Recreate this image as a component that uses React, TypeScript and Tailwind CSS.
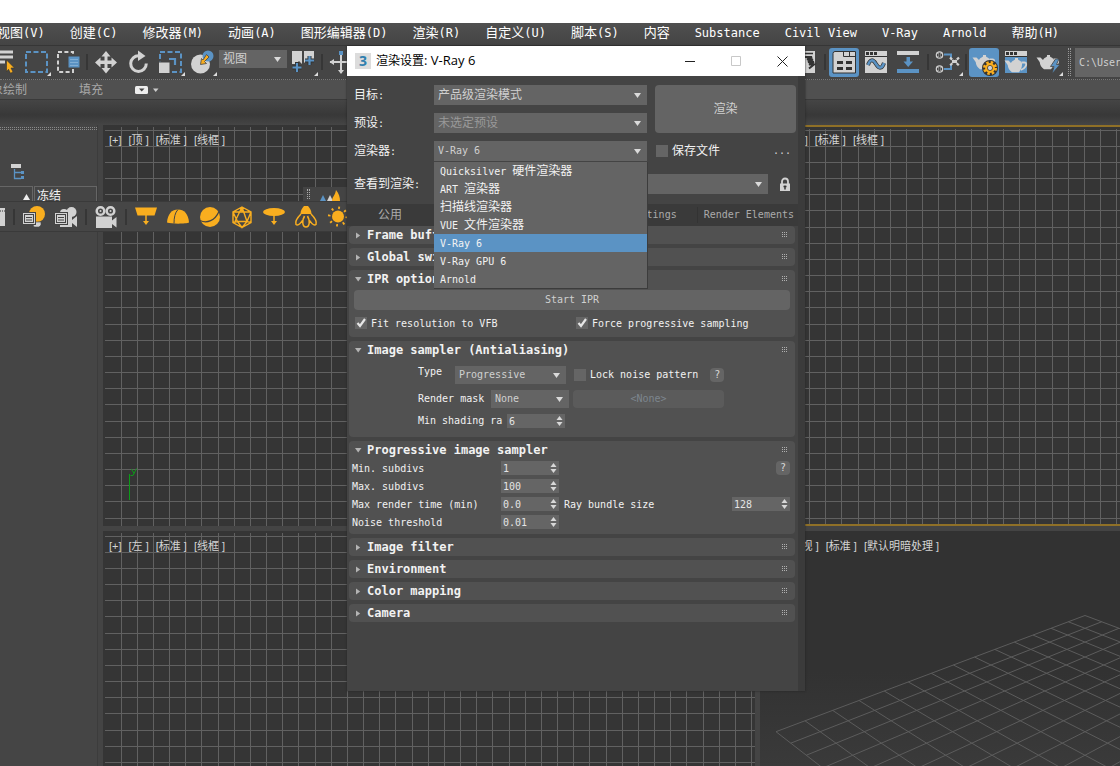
import React from 'react';

const MENU = [
  '视图(V)', '创建(C)', '修改器(M)', '动画(A)', '图形编辑器(D)', '渲染(R)', '自定义(U)',
  '脚本(S)', '内容', 'Substance', 'Civil View', 'V-Ray', 'Arnold', '帮助(H)',
];

const RENDERERS = [
  'Quicksilver 硬件渲染器', 'ART 渲染器', '扫描线渲染器', 'VUE 文件渲染器', 'V-Ray 6', 'V-Ray GPU 6', 'Arnold',
];

const GRAY = '#d2d2d2';
const BLUE = '#5b93c4';
const ORANGE = '#f9ae1f';
const DARK = '#333333';

// Chinese runs take the size of the parent, latin runs get their own size
const Mixed: React.FC<{ text: string; latin?: string }> = ({ text, latin = 'text-[10px]' }) => (
  <span className="whitespace-pre">
    {text.split(/([\x20-\x7e]+)/).map((part, i) =>
      i % 2 ? <span key={i} className={latin}>{part}</span> : part
    )}
  </span>
);

/* ---------- small pieces ---------- */

const Down: React.FC = () => (
  <svg width="7" height="5" viewBox="0 0 7 5"><path d="M0 0h7L3.5 5z" fill="#dadada" /></svg>
);

const Dropdown: React.FC<{ label: string; value: string; className: string; textClass?: string }> = ({
  label, value, className, textClass = 'text-[10px] text-[#d0d0d0]',
}) => (
  <div className={`relative bg-[#646464] ${className}`}>
    <select aria-label={label} className={`block h-full w-full appearance-none bg-transparent pl-1 pr-4 outline-none ${textClass}`}>
      <option>{value}</option>
    </select>
    <span className="pointer-events-none absolute inset-y-0 right-1.5 flex items-center"><Down /></span>
  </div>
);

const Check: React.FC<{ label: string; checked?: boolean; className?: string }> = ({ label, checked, className = '' }) => (
  <label className={`flex items-center gap-1 ${className}`}>
    <span className="relative flex">
      <input type="checkbox" defaultChecked={checked} className="peer h-3 w-3 appearance-none bg-[#656565]" />
      <svg className="pointer-events-none absolute inset-0 hidden peer-checked:block" width="12" height="12" viewBox="0 0 12 12">
        <path d="M2.5 6l2.5 3 5-7" fill="none" stroke="#e6e6e6" strokeWidth="2.2" />
      </svg>
    </span>
    <Mixed text={label} />
  </label>
);

const Spinner: React.FC<{ id: string; value: string }> = ({ id, value }) => (
  <div className="relative h-3.5 w-[58px] shrink-0 bg-[#656565]">
    <input id={id} defaultValue={value} className="block h-full w-full bg-transparent pl-0.5 pr-3 text-[10px] text-[#e4e4e4] outline-none" />
    <svg className="pointer-events-none absolute right-0.5 top-0.5" width="7" height="10" viewBox="0 0 7 10">
      <path d="M3.5 0L6.5 4h-6zM3.5 10L.5 6h6z" fill="#d8d8d8" />
    </svg>
  </div>
);

const Help: React.FC<{ className?: string }> = ({ className = '' }) => (
  <button className={`h-3.5 w-3.5 rounded-sm bg-[#656565] text-[10px] leading-3 text-[#d8d8d8] ${className}`}>?</button>
);

const Rollup: React.FC<{ title: string; open?: boolean; className?: string; children?: React.ReactNode }> = ({
  title, open, className = '', children,
}) => (
  <section className={`rounded-sm bg-[#515151] ${className}`}>
    <button className="flex h-[18px] w-full items-center pl-1.5 pr-[7px] text-left">
      <svg width="7" height="7" viewBox="0 0 7 7">
        {open ? <path d="M0 1h6.5L3.2 5.5z" fill="#b4b4b4" /> : <path d="M1 0.5L5.2 3.5L1 6.5z" fill="#b4b4b4" />}
      </svg>
      <span className="ml-[5px] text-[12px] font-bold leading-4">{title}</span>
      <svg className="ml-auto" width="7" height="8" viewBox="0 0 7 8" fill="#b0b0b0" shapeRendering="crispEdges">
        {[0, 1, 2].map((r) => [0, 1, 2].map((c) => <rect key={`${r}${c}`} x={c * 2 + 1} y={r * 2 + 1} width="1" height="1" />))}
      </svg>
    </button>
    {children}
  </section>
);

/* ---------- toolbar icons, all on a 32 x 32 box ---------- */

const Icon: React.FC<{ name: string; active?: boolean; flyout?: boolean; children: React.ReactNode }> = ({ name, active, flyout, children }) => (
  <button aria-label={name} className="flex h-8 w-8 shrink-0 items-center justify-center">
    <svg width="32" height="32" viewBox="0 0 32 32" fill="none">
      {active && <rect x="1" y="2" width="30" height="29" rx="3" fill={BLUE} />}
      {children}
      {flyout && <path d="M31 26v4h-4z" fill="#dddddd" />}
    </svg>
  </button>
);

const Sep: React.FC<{ className?: string }> = ({ className = 'w-1.5' }) => (
  <span className={`flex shrink-0 justify-center ${className}`}><span className="h-4 w-0.5 bg-[#363636]" /></span>
);

const Teapot: React.FC = () => (
  <>
    <path d="M4.500 11.500h4l2.500 2.500c.8-1.500 1.600-2.400 3-2.800L15 10.500V9h3v1.500l1 .7c1.500.5 2.500 1.500 3 3 .3 3-.6 6.300-3 9h-7c-2.500-1.500-4-4.200-4.300-7.200z" fill={GRAY} />
    <path d="M21.500 13.500h3c2.300 0 2 2.500.8 4.200-1 1.500-2.500 2.600-4.300 3.100" stroke={GRAY} strokeWidth="1.800" />
  </>
);

const WindowTop: React.FC = () => (
  <>
    <rect x="5" y="5" width="22" height="22" fill={GRAY} />
    <path d="M6 7.500h3M10 7.500h3M14 7.500h3" stroke={DARK} strokeWidth="3" />
    <path d="M5 10.500h22" stroke={DARK} strokeWidth="1" />
  </>
);

const ToolbarLeft: React.FC = () => (
  <div className="-ml-3 flex h-8 items-center">
    <Icon name="按名称选择">
      <path d="M6 6h19M6 11h19M6 16h11" stroke={GRAY} strokeWidth="3" />
      <path d="M18.500 14l8 8h-3.500l2 4-2.500 1.300-2-4-2 2.500z" fill={ORANGE} stroke={DARK} strokeWidth=".6" />
    </Icon>
    <Icon name="矩形选择区域" flyout>
      <rect x="6" y="6" width="21" height="20" stroke={BLUE} strokeWidth="2" strokeDasharray="5 2.500" />
    </Icon>
    <Icon name="窗口/交叉">
      <rect x="6" y="6" width="15" height="20" stroke={GRAY} strokeWidth="2" strokeDasharray="4 2.400" />
      <rect x="16" y="10" width="12" height="12" fill={BLUE} stroke="#444" />
      <path d="M18.500 13.500h8M18.500 16.500h8M18.500 19.500h8" stroke="#a9c9e4" strokeDasharray="1 1" />
    </Icon>
    <Sep />
    <Icon name="移动">
      <path d="M16 5l4.500 5.500h-3v4h4v-3l5.500 5-5.500 5v-3.500h-4v4h3L16 27.500 11.500 22h3v-4h-4v3.500L5 16.500l5.500-5v3h4v-4h-3z" fill={GRAY} />
    </Icon>
    <Icon name="旋转">
      <path d="M17 9.800a7.800 7.800 0 1 0 7.300 7.700" stroke={GRAY} strokeWidth="3" />
      <path d="M16 4.500l7.500 5.500-7.500 5z" fill={GRAY} />
    </Icon>
    <Icon name="缩放" flyout>
      <rect x="6" y="6" width="21" height="20" stroke={BLUE} strokeWidth="2" strokeDasharray="5 2.500" />
      <rect x="4.500" y="16" width="11.500" height="11.500" fill={GRAY} stroke="#444" />
      <path d="M15 13h6v6" stroke={BLUE} strokeWidth="2.200" />
    </Icon>
    <Icon name="放置" flyout>
      <circle cx="14.500" cy="18" r="9.500" fill={GRAY} />
      <circle cx="22" cy="10" r="5.500" fill={BLUE} />
      <path d="M20.500 8.500l2.500 2.500-4.500 4.500 2 2-6 1 1-6 1.500 1.500z" fill={ORANGE} stroke="#444" strokeWidth=".8" />
    </Icon>
    <Dropdown label="参考坐标系" value="视图" className="-mt-1.5 ml-px h-[18px] w-[68px]" textClass="text-xs text-[#d0d0d0]" />
    <Icon name="使用轴点中心" flyout>
      <path d="M5 5h10v13l-3-3-3 3H5zM17 5h10v8l-4 3-3-2-3 3z" fill={GRAY} />
      <path d="M10 16v10M5.500 21.500h9M22.500 10v9M18 14.500h9" stroke={DARK} strokeWidth="4" />
      <path d="M10 17v9M5.500 21.500h9M22.500 10v9M18 14.500h9" stroke={BLUE} strokeWidth="2.200" />
    </Icon>
    <Sep />
    <Icon name="选择并操纵">
      <path d="M5 16h22M16 5v22" stroke={GRAY} strokeWidth="2" />
      <path d="M9 13v6L4.500 16zM13 24h6L16 28z" fill={GRAY} />
      <rect x="14" y="5" width="4" height="4" fill={BLUE} />
    </Icon>
  </div>
);

const ToolbarRight: React.FC = () => (
  <div className="ml-auto flex h-8 items-center">
    <Icon name="层资源管理器">
      <rect x="3" y="5" width="22" height="22" fill={GRAY} />
      <path d="M14 7.500h9" stroke={DARK} strokeWidth="1.500" />
      <path d="M14 11h8l-5 2.500h6l-5 2.500h6l-5 2.500h5l-5 4" stroke={DARK} strokeWidth="2" />
    </Icon>
    <Sep />
    <Icon name="功能区" active>
      <path d="M5 7.500a2 2 0 0 1 2-2h20.500V27H5z" fill={GRAY} stroke={DARK} />
      <path d="M15.500 5.500v5h12M21.500 5.500v5" stroke={DARK} />
      <path d="M9 16.500h6M18 16.500h6M9 22.500h6M18 22.500h6" stroke={DARK} strokeWidth="3" />
    </Icon>
    <Icon name="曲线编辑器">
      <WindowTop />
      <path d="M8 19c2-6 5-6 8-1s6 5 8-1" stroke={DARK} strokeWidth="4" />
      <path d="M8 19c2-6 5-6 8-1s6 5 8-1" stroke={BLUE} strokeWidth="2.500" />
    </Icon>
    <Icon name="图解视图">
      <path d="M5 7h22" stroke={GRAY} strokeWidth="4" />
      <path d="M5 25h22" stroke={BLUE} strokeWidth="4" />
      <path d="M14.500 11h3.500v4.500h3L16.200 21l-4.700-5.500h3z" fill={BLUE} />
    </Icon>
    <Sep className="w-2" />
    <Icon name="材质编辑器" flyout>
      <path d="M12 8.500h7v5M12 23h7v-5" stroke={BLUE} strokeWidth="2" />
      {[[7.5, 9], [7.5, 23]].map(([x, y]) => (
        <g key={y}>
          <circle cx={x} cy={y} r="3.200" stroke={GRAY} strokeWidth="1.200" />
          <path d={`M${x - 2.500} ${y - 2.500}l5 5m0-5l-5 5`} stroke={GRAY} />
          <circle cx={x} cy={y} r="1" fill="#444" />
        </g>
      ))}
      <path d="M18 11.500l4 4-4 4M27 11.500l-4 4 4 4" stroke={GRAY} strokeWidth="2.200" strokeDasharray="3 1" />
      <path d="M20 15.500h5" stroke={GRAY} strokeWidth="3" />
    </Icon>
    <Sep className="w-1" />
    <Icon name="渲染设置" active>
      <Teapot />
      <circle cx="22" cy="22" r="5" stroke={DARK} strokeWidth="6" />
      <circle cx="22" cy="22" r="5.500" stroke={ORANGE} strokeWidth="3" strokeDasharray="2.400 1.920" />
      <circle cx="22" cy="22" r="3.800" stroke={ORANGE} strokeWidth="2.200" />
      <circle cx="22" cy="22" r="2" fill={GRAY} />
    </Icon>
    <Icon name="渲染帧窗口">
      <WindowTop />
      <rect x="5" y="11" width="22" height="16" fill={BLUE} />
      <g transform="translate(0 3)"><Teapot /></g>
    </Icon>
    <Icon name="渲染产品" flyout>
      <Teapot />
      <path d="M23.500 13l-5 7.500H22l-2 7.500 8-9.500h-3.500l2.500-5.500z" fill={BLUE} stroke="#444" strokeWidth=".8" />
    </Icon>
    <span className="ml-1 mr-1 h-7 w-[3px] border-x border-dotted border-[#999999]" />
    <input aria-label="项目路径" defaultValue="C:\User" className="h-[29px] w-[45px] bg-[#646464] pl-1 text-[10px] text-[#d0d0d0] outline-none" />
  </div>
);

/* ---------- light toolbar lying over the side panel and the viewport ---------- */

const ListBadge: React.FC = () => (
  <>
    <rect x="4.500" y="11.500" width="13" height="12" fill={GRAY} stroke="#444" />
    <rect x="6.500" y="13.500" width="9" height="8" stroke="#444" />
    <path d="M8 16.500h6M8 19h6" stroke="#444" />
  </>
);

const LightToolbar: React.FC = () => (
  <div className="absolute left-0 top-[201px] flex h-[31px] w-[347px] items-center overflow-hidden border-y border-[#3a3a3a] bg-[#464646]">
    <svg className="shrink-0" width="10" height="20" viewBox="0 0 10 20"><path d="M0 1h5v18H0z" fill={GRAY} /><path d="M0 4h5" stroke={DARK} strokeDasharray="1 1" /></svg>
    <Sep className="w-2" />
    <Icon name="灯光列表">
      <circle cx="19" cy="13" r="8" fill={ORANGE} />
      <path d="M14 21h9v3l-2 2h-5z" fill={GRAY} stroke="#444" strokeWidth=".6" />
      <ListBadge />
    </Icon>
    <Icon name="相机列表">
      <circle cx="14" cy="12" r="4" fill={GRAY} /><circle cx="21.500" cy="11" r="5" fill={GRAY} />
      <path d="M10 15h12v4l5-4v11l-5-4v4H10z" fill={GRAY} />
      <ListBadge />
    </Icon>
    <Sep className="w-2" />
    <Icon name="相机">
      <circle cx="10.500" cy="10" r="3.800" stroke={GRAY} strokeWidth="2.500" /><circle cx="20.500" cy="10" r="3.800" stroke={GRAY} strokeWidth="2.500" />
      <circle cx="10.500" cy="10" r="1" fill={GRAY} /><circle cx="20.500" cy="10" r="1" fill={GRAY} />
      <path d="M6 15.500h16v4l4.500-3.500v10.500L22 23v4H6z" fill={GRAY} />
    </Icon>
    <Sep className="w-2" />
    <Icon name="平面灯">
      <path d="M5 6.500h22l-2.500 8h-17z" fill={ORANGE} />
      <path d="M16 14v7" stroke={ORANGE} strokeWidth="1.500" /><path d="M13 20h6l-3 4z" fill={ORANGE} />
    </Icon>
    <Icon name="穹顶灯">
      <path d="M5 21.500C5.500 13 10 8.500 16 8.500s10.500 4.500 11 13c-3 1.500-18 1.500-22 0z" fill={ORANGE} />
      <path d="M16 8.500c-3 3-4 8-4 14" stroke="#444" />
    </Icon>
    <Icon name="球体灯">
      <circle cx="16" cy="16" r="10" fill={ORANGE} />
      <path d="M6 19.500c7 3.500 15 0 19-9" stroke="#444" strokeWidth="1.300" />
    </Icon>
    <Icon name="网格灯">
      <path d="M16 6l9 5v10.500l-9 5-9-5V11zM7 11h18M7 11l4.500 9.500h9.500L25 11M16 6l-7 14.500M16 6l5 14.500M7 21.500l4.500-1L16 26.500l5-6 4 1M16 6v5" stroke={ORANGE} strokeWidth="1.400" />
    </Icon>
    <Icon name="圆盘灯">
      <ellipse cx="16" cy="11" rx="11" ry="4" fill={ORANGE} />
      <path d="M16 14v7" stroke={ORANGE} strokeWidth="1.500" /><path d="M13 20h6l-3 4z" fill={ORANGE} />
    </Icon>
    <Icon name="IES灯">
      <path d="M10.500 13c0-4 2-6 3.500-8h4c1.500 2 3.500 4 3.500 8z" fill={ORANGE} />
      <path d="M11 13c-4 4-6 8-5 10.500 2 1.500 6-1.500 8.500-8M21 13c4 4 6 8 5 10.500-2 1.500-6-1.500-8.500-8M14.500 15c-3 5-2 11 1.500 11s4.500-6 1.500-11" stroke={ORANGE} strokeWidth="1.500" />
    </Icon>
    <Icon name="太阳">
      <circle cx="16" cy="15.500" r="6" fill={ORANGE} />
      <circle cx="16" cy="15.500" r="8.800" stroke={ORANGE} strokeWidth="2.500" strokeDasharray="1.800 5.100" />
    </Icon>
  </div>
);

/* ---------- viewports ---------- */

const PITCH = 16.17;
const LINES = Array.from({ length: 120 }, (_, i) => i);

const FlatGrid: React.FC<{ x: number; y: number }> = ({ x, y }) => (
  <svg className="absolute inset-0 h-full w-full" stroke="#616161" shapeRendering="crispEdges">
    {LINES.map((i) => {
      const px = Math.floor(x + i * PITCH) + 0.5;
      const py = Math.floor(y + i * PITCH) + 0.5;
      return (
        <g key={i}>
          <line x1={px} x2={px} y1="2" y2="100%" />
          <line x1="2" x2="100%" y1={py} y2={py} />
        </g>
      );
    })}
  </svg>
);

// ground plane point (i, j) of a 14 x 14 grid seen in perspective
const project = (i: number, j: number) => {
  const w = 54.3 - (i + j);
  return { x: 325 - (889.5 * (i - j)) / w, y: -250 + 18163 / w };
};

const GroundGrid: React.FC = () => (
  <svg className="absolute inset-0 h-full w-full" stroke="#5c5c5c">
    {LINES.slice(0, 15).map((i) => {
      const a = project(i, 0), b = project(i, 14), c = project(0, i), d = project(14, i);
      return (
        <g key={i}>
          <line x1={a.x} y1={a.y} x2={b.x} y2={b.y} />
          <line x1={c.x} y1={c.y} x2={d.x} y2={d.y} />
        </g>
      );
    })}
  </svg>
);

const ViewLabel: React.FC<{ parts: string[]; className: string }> = ({ parts, className }) => (
  <div className={`relative flex gap-[7px] whitespace-pre font-['Liberation_Sans','Noto_Sans_CJK_SC',sans-serif] text-[11px] leading-4 text-[#d4d4d4] ${className}`}>
    {parts.map((p) => <button key={p}>{p}</button>)}
  </div>
);

const Viewports: React.FC = () => (
  <main className="grid flex-1 grid-cols-[652fr_360fr] grid-rows-[401fr_235fr] gap-[5px]">
    <section className="relative overflow-hidden bg-[#353535]">
      <FlatGrid x={18} y={5} />
      <ViewLabel parts={['[+]', '[顶 ]', '[标准 ]', '[线框 ]']} className="pl-1.5 pt-[7px]" />
      <svg className="absolute left-[25px] top-[342px]" width="12" height="34" viewBox="0 0 12 34" stroke="#0c9a18" fill="none">
        <path d="M1.500 7v26M3.500 2l2.500 4.500M8.500 1.500L5 8.500H2.500" />
      </svg>
    </section>
    <section className="relative overflow-hidden border-y-2 border-[#8f7027] bg-[#353535]">
      <FlatGrid x={1} y={3} />
      <ViewLabel parts={['[+]', '[前 ]', '[标准 ]', '[线框 ]']} className="pl-2 pt-[5px]" />
    </section>
    <section className="relative overflow-hidden bg-[#353535]">
      <FlatGrid x={18} y={5} />
      <ViewLabel parts={['[+]', '[左 ]', '[标准 ]', '[线框 ]']} className="pl-1.5 pt-[7px]" />
    </section>
    <section className="relative overflow-hidden bg-gradient-to-b from-[#323232] from-60% to-[#3a3a3a]">
      <GroundGrid />
      <ViewLabel parts={['[+]', '[透视 ]', '[标准 ]', '[默认明暗处理 ]']} className="pl-2 pt-[7px]" />
    </section>
  </main>
);

const SidePanel: React.FC = () => (
  <aside className="mr-[5px] w-[98px] shrink-0 border-r border-[#3c3c3c] bg-[#454545]">
    <div className="mt-0.5 h-[3px] border-y border-dotted border-[#8a8a8a]" />
    <svg className="ml-[11px] mt-[34px]" width="15" height="16" viewBox="0 0 15 16" fill="none">
      <path d="M0 0h10v4H0z" fill={GRAY} />
      <path d="M3.500 5v9.500H10M3.500 8.500H10" stroke={BLUE} strokeWidth="1.300" />
      <path d="M10 7h3v3h-3zM10 12h3v3h-3z" fill={BLUE} />
    </svg>
    <div className="mt-1.5 flex h-[22px] text-xs leading-[18px]">
      <div className="flex w-[33px] justify-end border-r border-t border-[#666666] pr-0.5 pt-[7px]">
        <svg width="7" height="6" viewBox="0 0 7 6"><path d="M3.500 0L7 6H0z" fill="#eee" /></svg>
      </div>
      <div className="ml-px flex-1 border border-[#666666] pl-0.5">冻结</div>
    </div>
  </aside>
);

/* ---------- render settings window ---------- */

const Field: React.FC<{ id: string; label: string; value: string; children?: React.ReactNode }> = ({ id, label, value, children }) => (
  <div className="flex h-[18px] items-center pl-[3px] pr-[5px]">
    <label htmlFor={id} className="w-[149px]"><Mixed text={label} /></label>
    <Spinner id={id} value={value} />
    {children}
  </div>
);

const RenderSettings: React.FC = () => (
  <div role="dialog" aria-label="渲染设置" className="absolute left-[347px] top-[46px] flex h-[645px] w-[458px] flex-col border-r-[7px] border-[#3b3b3b] bg-[#444444] shadow-[0_0_2px_#222]">
    <header className="-mr-[7px] flex h-[30px] items-center bg-white pl-2 text-black">
      <span className="w-4 bg-[#dcdcdc] text-center font-['Open_Sans',sans-serif] text-sm font-bold leading-4 text-[#2f7fae]">3</span>
      <h1 className="ml-[5px] font-['Open_Sans','Noto_Sans_CJK_SC',sans-serif] text-xs"><Mixed text="渲染设置: V-Ray 6" latin="text-[13px]" /></h1>
      <div className="ml-auto flex">
        <button aria-label="最小化" className="flex h-[30px] w-[46px] items-center justify-center"><svg width="10" height="10" stroke="#222"><path d="M0 5.500h10" /></svg></button>
        <button aria-label="最大化" disabled className="flex h-[30px] w-[46px] items-center justify-center"><svg width="10" height="10" stroke="#c8c8c8" fill="none"><path d="M.5.5h9v9h-9z" /></svg></button>
        <button aria-label="关闭" className="flex h-[30px] w-[46px] items-center justify-center"><svg width="11" height="11" stroke="#222"><path d="M.5.5l10 10M10.500.5l-10 10" /></svg></button>
      </div>
    </header>

    <div className="px-[7px] pb-2.5 pt-[9px] text-xs">
      <div className="flex gap-2">
        <div className="flex flex-col gap-2">
          <div className="flex h-5 items-center">
            <span className="w-20"><Mixed text="目标:" /></span>
            <Dropdown label="目标" value="产品级渲染模式" className="h-5 w-[213px]" textClass="text-xs text-[#d0d0d0]" />
          </div>
          <div className="flex h-5 items-center">
            <span className="w-20"><Mixed text="预设:" /></span>
            <Dropdown label="预设" value="未选定预设" className="h-5 w-[213px]" textClass="text-xs text-[#999999]" />
          </div>
        </div>
        <button className="mr-[-5px] flex-1 rounded bg-[#646464] text-[#d0d0d0]">渲染</button>
      </div>
      <div className="mt-2 flex h-5 items-center">
        <span className="w-20"><Mixed text="渲染器:" /></span>
        <div className="relative">
          <Dropdown label="渲染器" value="V-Ray 6" className="h-5 w-[213px]" />
          <ul role="listbox" className="absolute left-0 top-[21px] z-10 w-[214px] border-b border-r border-[#3c3c3c] bg-[#646464]">
            {RENDERERS.map((r) => (
              <li key={r} role="option" aria-selected={r === 'V-Ray 6'}
                className={`h-[18px] pl-1.5 leading-[18px] ${r === 'V-Ray 6' ? 'bg-[#5b93c4]' : ''}`}>
                <Mixed text={r} />
              </li>
            ))}
          </ul>
        </div>
        <Check label="保存文件" className="ml-[9px]" />
        <button className="ml-auto text-[10px] text-[#d0d0d0]">...</button>
      </div>
      <div className="mt-[13px] flex h-5 items-center">
        <span className="w-20"><Mixed text="查看到渲染:" /></span>
        <Dropdown label="查看到渲染" value="" className="h-5 flex-1" />
        <button aria-label="锁定" className="ml-[11px]">
          <svg width="12" height="15" viewBox="0 0 12 15" fill="none">
            <path d="M3 7V4.500a3 3 0 0 1 6 0V7" stroke={GRAY} strokeWidth="1.800" />
            <path d="M1 6.500h10V14H1z" fill={GRAY} />
            <path d="M6 8.500v4M4.500 9.500h3" stroke="#333" strokeWidth="1.500" />
          </svg>
        </button>
      </div>
    </div>

    <nav className="flex h-[22px] items-center bg-[#3a3a3a] text-xs text-[#ababab]">
      <button className="ml-[31px]">公用</button>
      <button className="ml-auto text-[10px]">Settings</button>
      <span className="ml-5 h-4 w-px bg-[#333333]" />
      <button className="mx-[6px] mr-1 text-[10px]">Render Elements</button>
    </nav>

    <div className="flex flex-col gap-1 pl-0.5 pr-[3px] text-xs">
      <Rollup title="Frame buffer" />
      <Rollup title="Global switches" />
      <Rollup title="IPR options" open className="h-[67px]">
        <div className="px-[5px] pt-0.5">
          <button className="block h-5 w-full rounded bg-[#646464] text-[10px] text-[#d0d0d0]">Start IPR</button>
          <div className="mt-[5px] grid grid-cols-[221px_1fr] pl-px">
            <Check label="Fit resolution to VFB" checked />
            <Check label="Force progressive sampling" checked />
          </div>
        </div>
      </Rollup>
      <Rollup title="Image sampler (Antialiasing)" open className="h-24">
        <div className="flex flex-col pl-[69px] pt-[7px] text-[10px]">
          <div className="flex h-[18px] items-center">
            <span className="w-[37px] self-start leading-3">Type</span>
            <Dropdown label="Type" value="Progressive" className="h-[18px] w-[111px]" />
            <Check label="Lock noise pattern" className="ml-2" />
            <Help className="ml-3" />
          </div>
          <div className="mt-1.5 flex h-[18px] items-center">
            <span className="w-[73px]">Render mask</span>
            <Dropdown label="Render mask" value="None" className="h-[18px] w-[78px]" />
            <button disabled className="ml-1 h-[18px] w-[151px] rounded-sm bg-[#5b5b5b] text-[#7d868e]">&lt;None&gt;</button>
          </div>
          <div className="mt-1.5 flex h-[14px] items-center">
            <label htmlFor="shading" className="w-[89px]">Min shading ra</label>
            <Spinner id="shading" value="6" />
          </div>
        </div>
      </Rollup>
      <Rollup title="Progressive image sampler" open className="h-[93px]">
        <Field id="min" label="Min. subdivs" value="1"><Help className="ml-auto" /></Field>
        <Field id="max" label="Max. subdivs" value="100" />
        <Field id="time" label="Max render time (min)" value="0.0">
          <label htmlFor="bundle" className="ml-[5px] mr-auto"><Mixed text="Ray bundle size" /></label>
          <Spinner id="bundle" value="128" />
        </Field>
        <Field id="noise" label="Noise threshold" value="0.01" />
      </Rollup>
      <Rollup title="Image filter" />
      <Rollup title="Environment" />
      <Rollup title="Color mapping" />
      <Rollup title="Camera" />
    </div>
  </div>
);

const App: React.FC = () => (
  <div className="relative flex min-h-screen flex-col overflow-hidden bg-[#444444] font-['DejaVu_Sans_Mono','Noto_Sans_CJK_SC',monospace] text-xs text-[#f2f2f2]">
    <div className="h-[23px] bg-white" />
    <nav className="flex h-[23px] items-center gap-[25px] border-b border-[#363636] bg-gradient-to-b from-[#505050] to-[#444444] pb-0.5 text-[13px] leading-4 text-white">
      {MENU.map((m, i) => (
        <button key={m} className={i === 0 ? '-ml-[3px] shrink-0' : 'shrink-0'}><Mixed text={m} latin="text-xs" /></button>
      ))}
    </nav>
    <div className="flex h-[34px] items-start border-b border-dotted border-[#777777] bg-[#454545]">
      <ToolbarLeft />
      <ToolbarRight />
    </div>
    <div className="flex h-[19px] items-center bg-[#505050] text-xs text-[#a8a8a8]">
      <button className="-ml-[21px] whitespace-nowrap">对象绘制</button>
      <button className="ml-[52px]">填充</button>
      <svg className="ml-8" width="24" height="8" viewBox="0 0 24 8">
        <rect width="13" height="8" rx="1.500" fill="#eeeeee" />
        <path d="M4 2.500h5.500L6.700 5.500z" fill="#444" />
        <path d="M18 2.500h5.500L20.700 6z" fill="#cccccc" />
      </svg>
    </div>
    <div className="h-[26px] border-t border-[#3a3a3a] bg-gradient-to-b from-[#454545] via-[#383838] via-60% to-[#454545]" />
    <div className="flex flex-1">
      <SidePanel />
      <Viewports />
    </div>
    <div className="absolute left-[303px] top-[187px] flex h-[14px] w-11 items-end gap-px bg-[#444444] pl-1">
      <span className="mb-0.5 h-2.5 w-[3px] border-x border-dotted border-[#aaaaaa]" />
      <svg className="ml-2" width="24" height="11" viewBox="0 0 24 11">
        <path d="M1 11l3-6 3 6z" fill={BLUE} /><path d="M8 11l3-6 3 6z" fill={GRAY} /><path d="M13 11c0-4 3-5 4-11 3 4 4 7 4 11z" fill={ORANGE} />
      </svg>
    </div>
    <LightToolbar />
    <RenderSettings />
  </div>
);

export default App;
